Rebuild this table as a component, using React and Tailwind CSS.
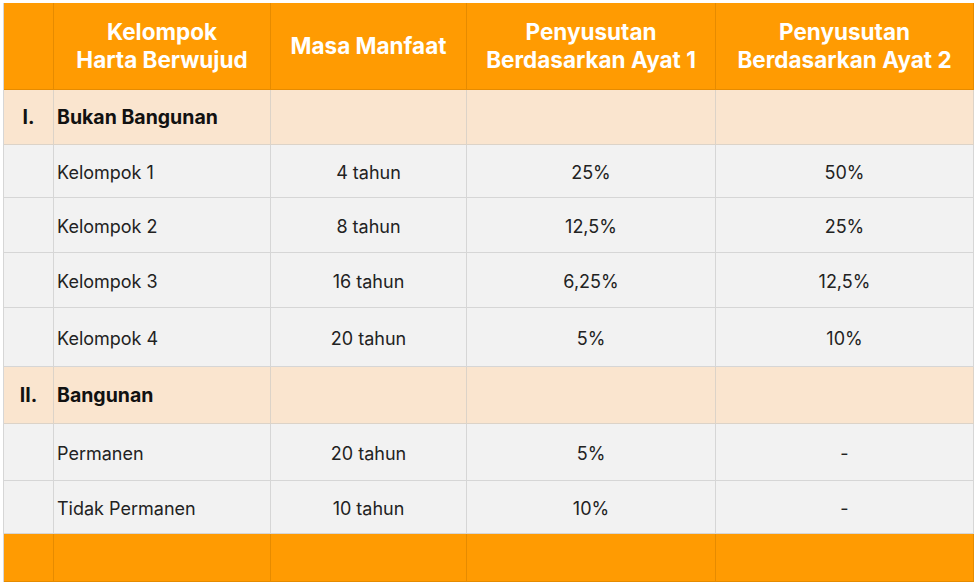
import React from "react";

const font = { fontFamily: "Inter, 'Noto Sans', sans-serif" };

function HeadCell({ children, className = "" }) {
  return (
    <div className={`flex items-center justify-center text-center bg-[#ff9b02] border-r border-b border-[#e68b00] text-white font-bold text-[22.5px] leading-[28px] ${className}`}>
      {children}
    </div>
  );
}

function SecRow({ num, label }) {
  return (
    <>
      <div className="flex items-center justify-center pt-[1px] bg-[#fae5cf] border-r border-b border-[#dcd3c8] text-[19.5px] font-bold text-[#111]">{num}</div>
      <div className="flex items-center pl-[3px] pt-[1px] bg-[#fae5cf] border-r border-b border-[#dcd3c8] text-[19.5px] font-bold text-[#111]">{label}</div>
      <div className="bg-[#fae5cf] border-r border-b border-[#dcd3c8]" />
      <div className="bg-[#fae5cf] border-r border-b border-[#dcd3c8]" />
      <div className="bg-[#fae5cf] border-r border-b border-[#dcd3c8]" />
    </>
  );
}

function DataRow({ label, a, b, c }) {
  const cell = "bg-[#f2f2f2] border-r border-b border-[#d6d6d6] text-[18px] text-[#222] flex items-center pt-[2px]";
  return (
    <>
      <div className={cell} />
      <div className={`${cell} pl-[3px]`}>{label}</div>
      <div className={`${cell} justify-center`}>{a}</div>
      <div className={`${cell} justify-center`}>{b}</div>
      <div className={`${cell} justify-center`}>{c}</div>
    </>
  );
}

export default function App() {
  return (
    <div className="w-[976px] h-[586px] bg-white pt-[3px] pl-[3px]" style={font}>
      <div className="grid grid-cols-[50px_217px_196px_249px_258px] grid-rows-[87px_55px_53px_55px_55px_59px_57px_57px_53px_48px] w-[970px] border-l border-[#d6d6d6]">
        <HeadCell />
        <HeadCell>Kelompok<br />Harta Berwujud</HeadCell>
        <HeadCell>Masa Manfaat</HeadCell>
        <HeadCell>Penyusutan<br />Berdasarkan Ayat 1</HeadCell>
        <HeadCell>Penyusutan<br />Berdasarkan Ayat 2</HeadCell>

        <SecRow num="I." label="Bukan Bangunan" />
        <DataRow label="Kelompok 1" a="4 tahun" b="25%" c="50%" />
        <DataRow label="Kelompok 2" a="8 tahun" b="12,5%" c="25%" />
        <DataRow label="Kelompok 3" a="16 tahun" b="6,25%" c="12,5%" />
        <DataRow label="Kelompok 4" a="20 tahun" b="5%" c="10%" />
        <SecRow num="II." label="Bangunan" />
        <DataRow label="Permanen" a="20 tahun" b="5%" c="-" />
        <DataRow label="Tidak Permanen" a="10 tahun" b="10%" c="-" />

        <HeadCell />
        <HeadCell />
        <HeadCell />
        <HeadCell />
        <HeadCell />
      </div>
    </div>
  );
}
